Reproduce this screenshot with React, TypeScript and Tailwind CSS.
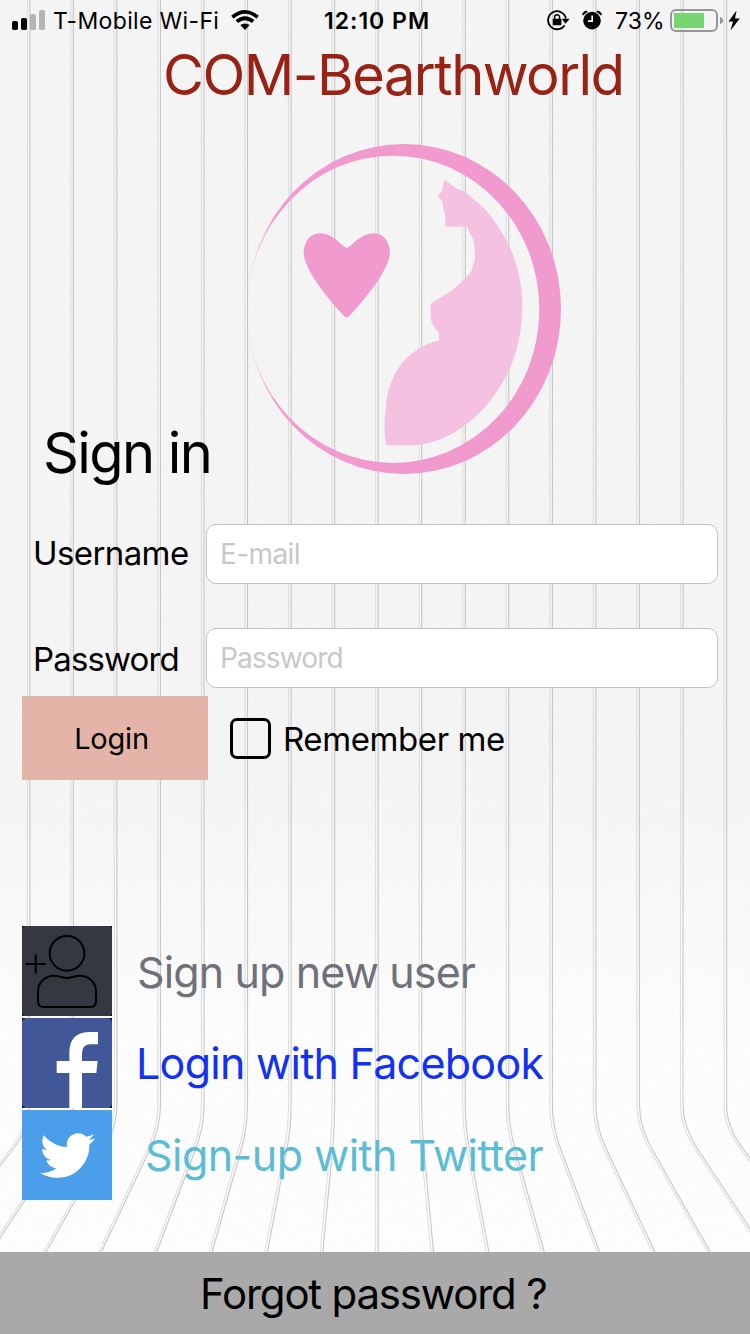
import React from "react";
import { FaTwitter } from "react-icons/fa";

const GROOVES = [-8, -7, -6, -5, -4, -3, -2, -1, 0, 1, 2, 3, 4, 5, 6, 7, 8];

function groove(k: number, shift: number) {
  const x = 378.2 + k * 43.55 + shift;
  const slope = k * 0.0945;
  return `M${x} 0V1105Q${x} 1127 ${x + slope * 22} 1149L${x + slope * 125} 1252`;
}

function Backdrop() {
  return (
    <svg className="absolute inset-0 -z-10" width="750" height="1334" viewBox="0 0 750 1334" fill="none">
      <defs>
        <linearGradient id="wall" x1="0" y1="0" x2="0" y2="1">
          <stop offset="0" stopColor="#f5f5f5" />
          <stop offset="0.58" stopColor="#f5f5f5" />
          <stop offset="0.78" stopColor="#fdfdfd" />
          <stop offset="1" stopColor="#fefefe" />
        </linearGradient>
        <filter id="grain" x="0" y="0" width="100%" height="100%">
          <feTurbulence type="fractalNoise" baseFrequency="0.45" numOctaves="2" seed="4" />
          <feColorMatrix values="0 0 0 0 0.4  0 0 0 0 0.4  0 0 0 0 0.4  0.1 0 0 0 -0.04" />
        </filter>
      </defs>
      <rect width="750" height="1334" fill="url(#wall)" />
      <rect width="750" height="1334" filter="url(#grain)" />
      {GROOVES.map((k) => (
        <g key={k}>
          <path d={groove(k, -2.6)} stroke="#dedede" strokeWidth="1.1" />
          <path d={groove(k, 0)} stroke="#c6c6c6" strokeWidth="1.1" />
        </g>
      ))}
    </svg>
  );
}

function StatusBar() {
  return (
    <header className="flex h-10 items-center text-[23px] leading-10 whitespace-nowrap">
      <svg className="ml-3" width="33" height="40" viewBox="0 0 33 40">
        <rect x="0" y="21" width="6" height="9" rx="1.8" />
        <rect x="9" y="18" width="6" height="12" rx="1.8" />
        <rect x="18" y="14" width="6" height="16" rx="1.8" fill="#b4b4b4" />
        <rect x="27" y="10" width="6" height="20" rx="1.8" fill="#b4b4b4" />
      </svg>
      <span className="ml-[8px] w-[178px] pt-[2px] tracking-[0.35px]">T-Mobile Wi-Fi</span>
      <svg width="28" height="40" viewBox="0 0 28 40" fill="none" stroke="#000" strokeWidth="3.8">
        <path d="M1.4 17.2Q14 6.6 26.6 17.2" />
        <path d="M5.8 21.6Q14 14.8 22.2 21.6" />
        <path d="M9.3 25Q14 21.8 18.7 25L14 30Z" fill="#000" stroke="none" />
      </svg>
      <span className="ml-[65px] w-[223px] pt-[2px] font-semibold tracking-[1px]">12:10 PM</span>
      <svg width="23" height="40" viewBox="0 0 23 40" fill="none" stroke="#000" strokeWidth="1.8">
        <path d="M17.6 25.2A9 9 0 1 1 18.9 18.5" />
        <path d="M14.6 18.8h8l-4 5Z" fill="#000" stroke="none" />
        <rect x="5.8" y="18.8" width="8.6" height="6.4" rx="0.8" fill="#000" stroke="none" />
        <path d="M7.6 19v-1.7a2.5 2.5 0 0 1 5 0V19" strokeWidth="1.5" />
      </svg>
      <svg className="ml-[12px]" width="20" height="40" viewBox="0 0 20 40" fill="none">
        <circle cx="10" cy="20.6" r="8.8" fill="#000" />
        <path d="M1 15.2q.4-3 4.2-3.6M19 15.2q-.4-3-4.2-3.6" stroke="#000" strokeWidth="2" />
        <path d="M10.2 15.5v5.6H6" stroke="#fff" strokeWidth="1.7" />
      </svg>
      <span className="ml-[13px] w-[55px] pt-[2px] tracking-[0.1px]">73%</span>
      <svg width="72" height="40" viewBox="0 0 72 40">
        <rect x="1" y="10" width="46" height="21" rx="5" fill="none" stroke="#969696" strokeWidth="2" />
        <rect x="4" y="13" width="30" height="15" fill="#77d572" />
        <path d="M50 17q3 1 3 3.5t-3 3.500Z" fill="#969696" />
        <path d="M66.5 10.500L58.500 21.500h4.500L60.500 30.500L69.800 18.600h-4.800Z" />
      </svg>
    </header>
  );
}

function Emblem() {
  return (
    <svg width="350" height="360" viewBox="0 0 1050 1080">
      <defs>
        <linearGradient id="fade" gradientUnits="userSpaceOnUse" x1="50" y1="0" x2="140" y2="0">
          <stop offset="0" stopColor="#fff" stopOpacity="0.25" />
          <stop offset="1" stopColor="#fff" />
        </linearGradient>
        <mask id="ring" maskUnits="userSpaceOnUse" x="0" y="0" width="1050" height="1080">
          <rect width="1050" height="1080" fill="url(#fade)" />
          <ellipse cx="489.5" cy="538" rx="438.5" ry="461" fill="#000" />
        </mask>
      </defs>
      <ellipse cx="522" cy="537" rx="471" ry="495" fill="#f09ace" mask="url(#ring)" />
      <path
        fill="#f09ace"
        d="M350 354C333 348 313 311 270 310C240 310 222 335 221 368C222 410 270 480 342 558Q350 567 358 558C430 480 478 410 480 368C479 335 461 310 431 310C388 312 368 348 350 354Z"
      />
      <path
        fill="#f4c1e0"
        d="M643 149L637 180L623 197L637 214Q639 240 646 258V290H711Q718 308 731 330Q737 365 734 392Q726 410 725 422Q700 455 664 482L602 521V567Q608 590 627 608V632Q590 638 560 660Q510 693 490 742Q468 790 467 840Q461 880 465 925L470 946H560Q640 936 701 889Q770 840 815 762Q876 660 877 530Q878 400 805 290Q770 235 722 200Q705 182 684 178Z"
      />
    </svg>
  );
}

type FieldProps = { label: string; hint: string; type: string; className: string; labelClassName: string };

function Field({ label, hint, type, className, labelClassName }: FieldProps) {
  return (
    <label className={"flex h-[60px] items-center " + className}>
      <span className={"w-[206px] shrink-0 pl-[33px] text-[33px] leading-none " + labelClassName}>{label}</span>
      <input
        type={type}
        placeholder={hint}
        className="h-[60px] w-[512px] rounded-[10px] border border-[#c4c4c4] bg-white px-[13px] pb-px text-[28px] placeholder:text-[#c7c7cc]"
      />
    </label>
  );
}

function NewUserTile() {
  return (
    <svg width="90" height="90" viewBox="66 78 270 270">
      <rect x="66" y="78" width="270" height="270" fill="#000" />
      <rect x="66" y="78" width="270" height="270" rx="10" fill="#353841" />
      <g fill="none" stroke="#000" strokeWidth="6">
        <circle cx="201" cy="160" r="52" />
        <path d="M77 192H137M107 163V221" />
        <path d="M114 275C114 245 138 227 162 227C178 227 184 234 201 234C218 234 224 227 240 227C264 227 288 245 288 275V304Q288 321 271 321H131Q114 321 114 304Z" />
      </g>
    </svg>
  );
}

function FacebookTile() {
  return (
    <svg width="90" height="90" viewBox="66 354 270 270">
      <rect x="66" y="354" width="270" height="270" fill="#101426" />
      <rect x="66" y="354" width="270" height="270" rx="14" fill="#415798" />
      <path
        fill="#fff"
        d="M208 624V519H170V483H208V455Q210 396 270 396H294V433H270Q246 434 246 460V483H293L289 519H246V624Z"
      />
    </svg>
  );
}

function TwitterTile() {
  return (
    <span className="flex h-[90px] w-[90px] items-center justify-center bg-[#4b9ee9] text-white">
      <FaTwitter size={55} />
    </span>
  );
}

export default function App() {
  return (
    <div className="relative isolate flex h-[1334px] w-[750px] flex-col overflow-hidden font-['Inter','Liberation_Sans',sans-serif] text-black">
      <Backdrop />
      <StatusBar />
      <h1 className="h-[90px] pl-[163px] text-[56px] leading-[70px] tracking-[-1.5px] whitespace-nowrap text-[#982314]">
        COM-Bearthworld
      </h1>
      <section className="flex h-[394px]">
        <h2 className="w-[230px] pt-[288px] pl-[43px] text-[56px] leading-[70px] tracking-[-1.6px] whitespace-nowrap">
          Sign in
        </h2>
        <Emblem />
      </section>
      <Field label="Username" hint="E-mail" type="email" className="tracking-[-0.6px]" labelClassName="pb-[2px]" />
      <div className="mt-[44px]">
        <Field label="Password" hint="Password" type="password" className="tracking-[-0.85px]" labelClassName="pt-[2px]" />
      </div>
      <div className="mt-2 flex h-[84px] items-center pl-[22px]">
        <button className="h-[84px] w-[186px] bg-[#e4b4a9] pt-[2px] pr-[7px] text-[29px] tracking-[-0.2px]">Login</button>
        <span className="ml-[22px] h-[41px] w-[41px] rounded-[7px] border-3 border-black" />
        <span className="ml-[12px] pt-[4px] text-[33px] tracking-[-0.4px] whitespace-nowrap">Remember me</span>
      </div>
      <nav className="mt-[146px] flex flex-col gap-[2px] pl-[22px] text-[43px] whitespace-nowrap">
        <a className="flex h-[90px] items-center tracking-[-0.87px] text-[#6f7179]">
          <NewUserTile />
          <span className="ml-[25px] pt-[2px]">Sign up new user</span>
        </a>
        <a className="flex h-[90px] items-center tracking-[-0.73px] text-[#1330f5]">
          <FacebookTile />
          <span className="ml-[24px]">Login with Facebook</span>
        </a>
        <a className="flex h-[90px] items-center tracking-[-0.55px] text-[#5bbcd5]">
          <TwitterTile />
          <span className="ml-[33px]">Sign-up with Twitter</span>
        </a>
      </nav>
      <footer className="mt-auto flex h-[82px] items-center bg-[#a9a9a9] pl-[200px] text-[42px] tracking-[-1.2px] whitespace-nowrap">
        <span>Forgot password ?</span>
      </footer>
    </div>
  );
}
